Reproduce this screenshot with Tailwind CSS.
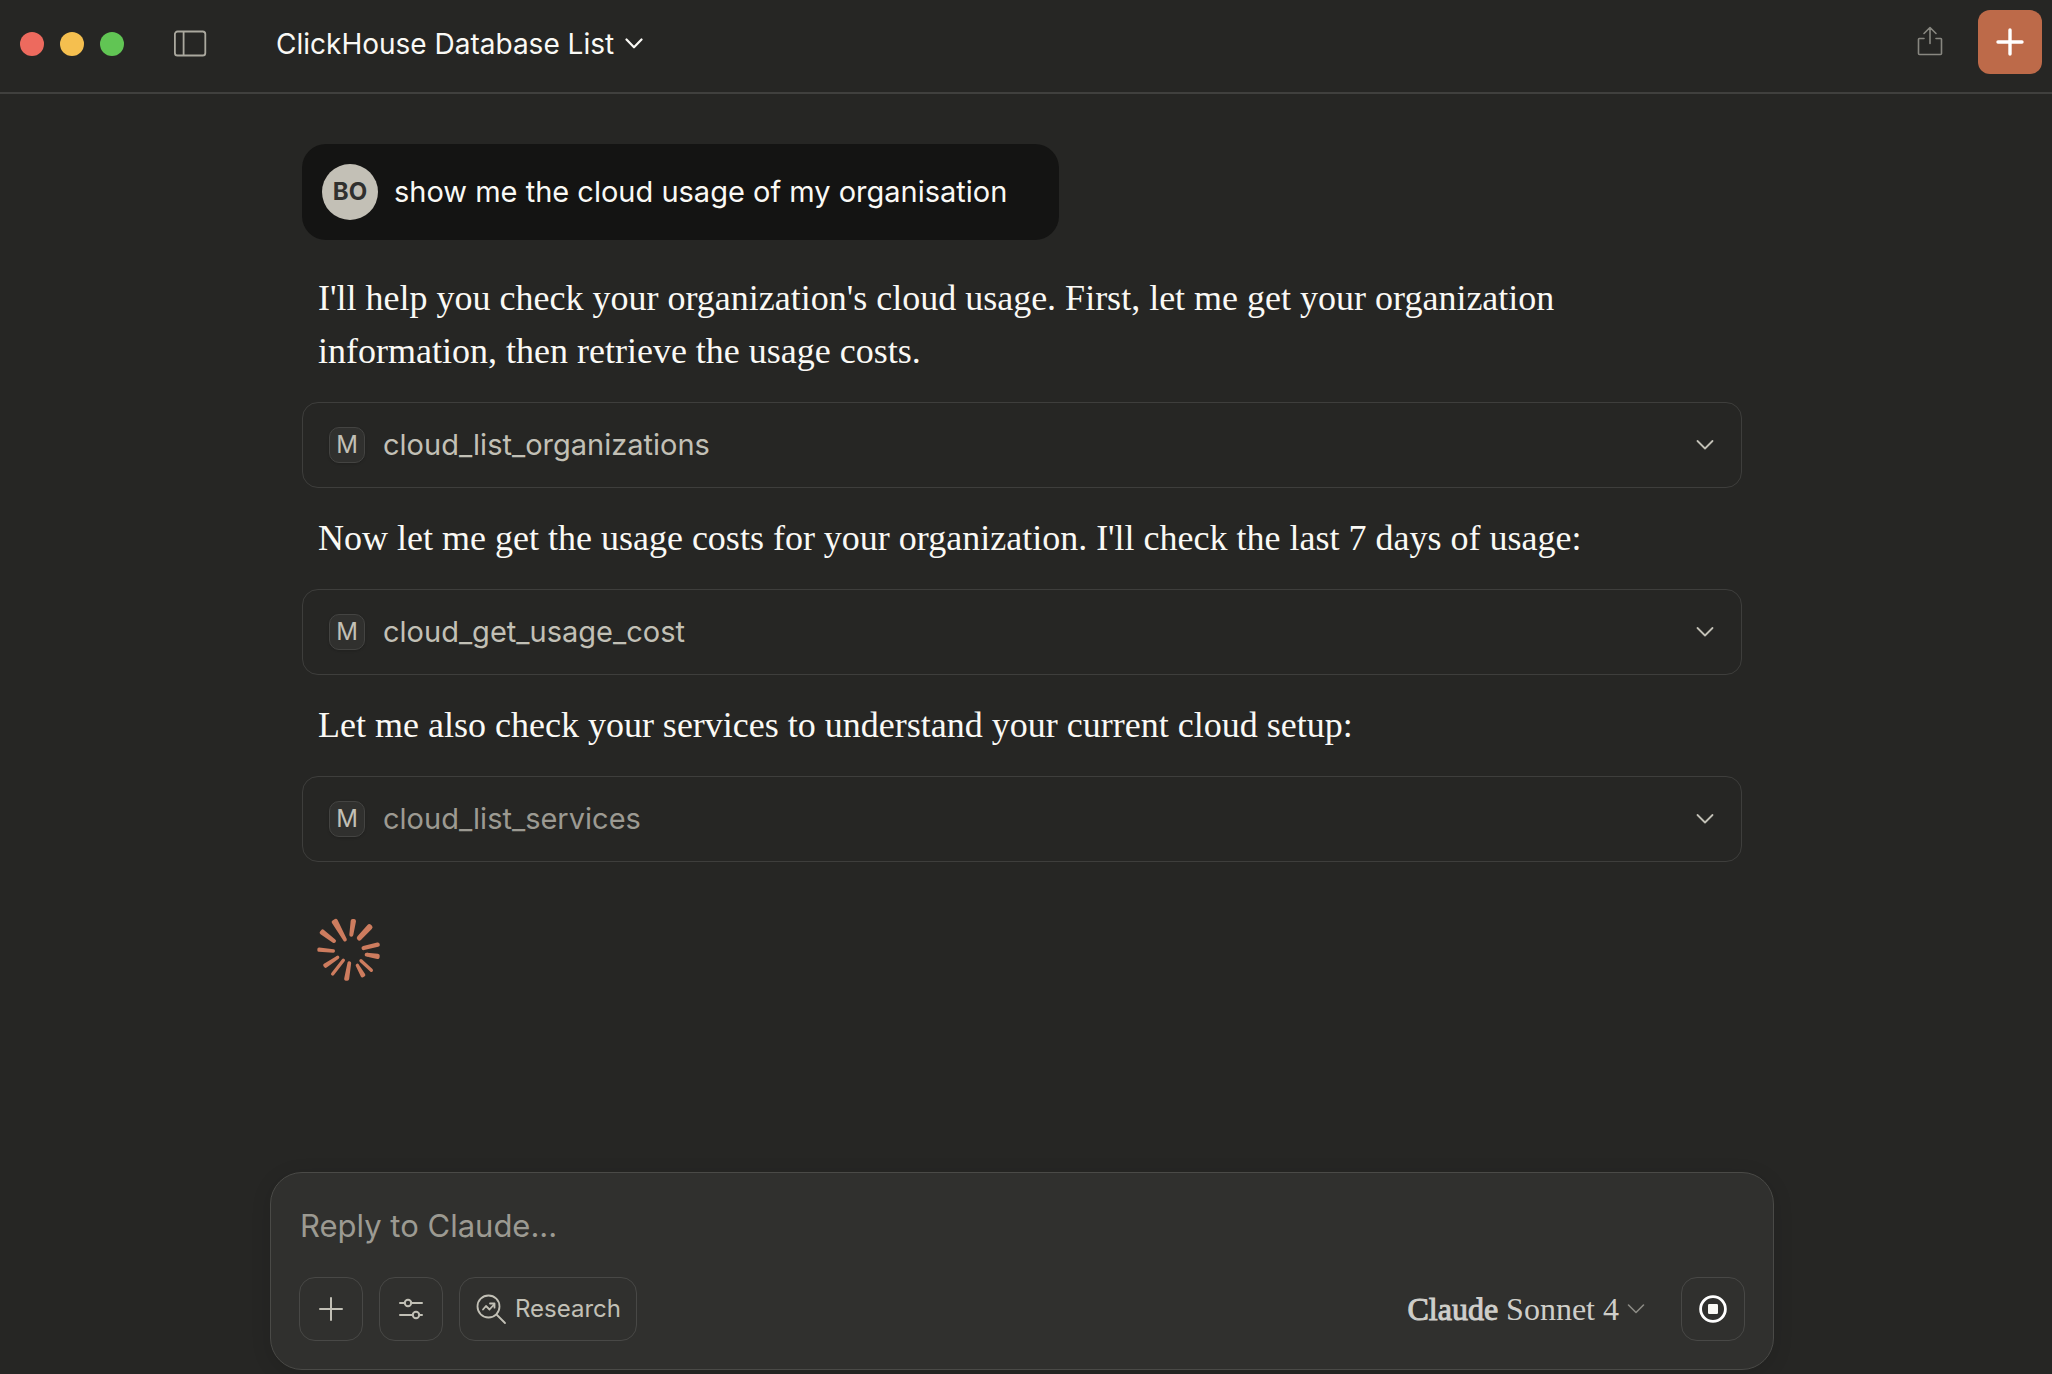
<!DOCTYPE html>
<html lang="en">
<head>
<meta charset="utf-8">
<meta name="viewport" content="width=device-width, initial-scale=1">
<title>ClickHouse Database List</title>
<script src="https://cdn.jsdelivr.net/npm/@tailwindcss/browser@4"></script>
</head>
<body class="flex min-h-screen flex-col bg-[#262624] font-['Inter',sans-serif] text-[#faf9f5]">

<header class="flex items-start justify-between border-b-2 border-[#40403e] pt-[10px] pr-[10px] pb-[14px] pl-5">
  <div class="flex h-[68px] items-center">
    <div class="flex gap-4">
      <button aria-label="Close" class="size-6 rounded-full bg-[#ed6a5e]"></button>
      <button aria-label="Minimize" class="size-6 rounded-full bg-[#f5bf4f]"></button>
      <button aria-label="Zoom" class="size-6 rounded-full bg-[#61c554]"></button>
    </div>
    <button aria-label="Toggle sidebar" class="ml-12">
      <svg class="h-7 w-9" viewBox="0 0 36 28" fill="none" stroke="#aaa89e" stroke-width="1.8"><rect x="2.9" y="1.5" width="30.4" height="24" rx="2.6"/><path d="M11.6 1.5v24"/></svg>
    </button>
    <button class="ml-[68px] flex items-center gap-[11px] text-[28px]">
      <h1>ClickHouse Database List</h1>
      <svg class="h-3 w-[18px]" viewBox="0 0 18 12" fill="none" stroke="#faf9f5" stroke-width="2.2" stroke-linecap="round" stroke-linejoin="round"><path d="M1.5 1.5 9 9.3l7.500-7.800"/></svg>
    </button>
  </div>
  <div class="flex h-16 items-center gap-[34px]">
    <button aria-label="Share">
      <svg class="h-8 w-7" viewBox="0 0 28 32" fill="none" stroke="#888780" stroke-width="1.6" stroke-linecap="round" stroke-linejoin="round"><path d="M8 12.500H3.200Q2.500 12.500 2.500 13.200V27.500Q2.500 28.500 3.500 28.500H24.500Q25.500 28.500 25.500 27.500V13.200Q25.500 12.500 24.800 12.500H20M14 17.500V1.500M8 7.500l6-6 6 6"/></svg>
    </button>
    <button aria-label="New chat" class="flex size-16 items-center justify-center rounded-xl bg-[#bd6a49]">
      <svg class="size-7" viewBox="0 0 28 28" stroke="#fff" stroke-width="3.400" stroke-linecap="round"><path d="M14 2v24M2 14h24"/></svg>
    </button>
  </div>
</header>

<main class="mx-auto w-full max-w-[1448px] flex-1 pt-[50px] pr-2">
  <div class="flex w-fit items-center gap-4 rounded-3xl bg-[#141413] py-5 pr-[52px] pl-5 text-[29px]">
    <span class="flex size-14 items-center justify-center rounded-full bg-[#c3c0b6] text-2xl font-bold text-[#30302e]">BO</span>
    <p>show me the cloud usage of my organisation</p>
  </div>

  <section class="mt-8 flex flex-col gap-6">
    <p class="max-w-[1330px] px-4 font-['Liberation_Serif',serif] text-[36px] leading-[53px]">I'll help you check your organization's cloud usage. First, let me get your organization information, then retrieve the usage costs.</p>
    <button class="flex h-[86px] items-center gap-[18px] rounded-2xl border border-[#3e3e3c] pr-[27px] pl-[26px] text-[29px] text-[#c2c0b6]">
      <span class="flex size-9 items-center justify-center rounded-[10px] border border-[#444442] bg-[#30302e] text-2xl shadow-sm">M</span>
      <span>cloud_list_organizations</span>
      <svg class="ml-auto h-3 w-[18px]" viewBox="0 0 18 12" fill="none" stroke="#c2c0b6" stroke-width="1.800" stroke-linecap="round" stroke-linejoin="round"><path d="M1.500 2 9 9.500 16.500 2"/></svg>
    </button>

    <p class="px-4 font-['Liberation_Serif',serif] text-[36px] leading-[53px]">Now let me get the usage costs for your organization. I'll check the last 7 days of usage:</p>
    <button class="flex h-[86px] items-center gap-[18px] rounded-2xl border border-[#3e3e3c] pr-[27px] pl-[26px] text-[29px] text-[#c2c0b6]">
      <span class="flex size-9 items-center justify-center rounded-[10px] border border-[#444442] bg-[#30302e] text-2xl shadow-sm">M</span>
      <span>cloud_get_usage_cost</span>
      <svg class="ml-auto h-3 w-[18px]" viewBox="0 0 18 12" fill="none" stroke="#c2c0b6" stroke-width="1.800" stroke-linecap="round" stroke-linejoin="round"><path d="M1.500 2 9 9.500 16.500 2"/></svg>
    </button>

    <p class="px-4 font-['Liberation_Serif',serif] text-[36px] leading-[53px]">Let me also check your services to understand your current cloud setup:</p>
    <button class="flex h-[86px] items-center gap-[18px] rounded-2xl border border-[#3e3e3c] pr-[27px] pl-[26px] text-[29px] text-[#c2c0b6]">
      <span class="flex size-9 items-center justify-center rounded-[10px] border border-[#444442] bg-[#30302e] text-2xl shadow-sm">M</span>
      <span class="text-[#9c9a92]">cloud_list_services</span>
      <svg class="ml-auto h-3 w-[18px]" viewBox="0 0 18 12" fill="none" stroke="#c2c0b6" stroke-width="1.800" stroke-linecap="round" stroke-linejoin="round"><path d="M1.500 2 9 9.500 16.500 2"/></svg>
    </button>
  </section>

  <svg role="img" aria-label="Working" class="mt-14 ml-[15px] size-16" viewBox="50 54 192 192" fill="#cd7c5e" stroke="#cd7c5e" stroke-linecap="round" stroke-linejoin="round">
    <path stroke-width="11" d="M106.500 62 134 119 99.500 66z"/>
    <path stroke-width="12" d="M161 63.200 153 104 157 62.800z"/>
    <path stroke-width="15" d="M209 82 177 114 207 80z"/>
    <path stroke-width="13" d="M232 134 190 144"/>
    <path stroke-width="12" d="M232.200 167 199 164 231.800 171z"/>
    <path stroke-width="10" d="M213 211 182 182"/>
    <path stroke-width="10" d="M190 225 171 196 186 227z"/>
    <path stroke-width="11" d="M141 236.500 147 189 137 236.500z"/>
    <path stroke-width="10" d="M97 222 129 181"/>
    <path stroke-width="10" d="M76 198.500 112 172 73.500 195.500z"/>
    <path stroke-width="10" d="M56 147.500 99 153 56 150.500z"/>
    <path stroke-width="12" d="M67 94.400 101 123 64 98z"/>
  </svg>
</main>

<footer class="mx-auto w-full max-w-[1512px] pr-2 pb-1">
  <form class="flex flex-col gap-7 rounded-[32px] border border-[#4a4a47] bg-[#30302e] p-7 shadow-[0_4px_20px_rgba(0,0,0,0.12)]">
    <input type="text" aria-label="Reply to Claude" placeholder="Reply to Claude..." class="h-12 w-full px-px text-[31px] outline-none placeholder:text-[#9c9a92]">
    <div class="flex items-center gap-4">
      <button type="button" aria-label="Add content" class="flex size-16 items-center justify-center rounded-2xl border border-[#484846]">
        <svg class="size-6" viewBox="0 0 24 24" stroke="#c2c0b6" stroke-width="2" stroke-linecap="round"><path d="M12 1v22M1 12h22"/></svg>
      </button>
      <button type="button" aria-label="Search and tools" class="flex size-16 items-center justify-center rounded-2xl border border-[#484846]">
        <svg class="size-6" viewBox="0 0 24 24" fill="none" stroke="#c2c0b6" stroke-width="2" stroke-linecap="round"><path d="M1 6h4.500M12.500 6H23M1 18h12.500M20.500 18H23"/><circle cx="9" cy="6" r="3.200"/><circle cx="17" cy="18" r="3.200"/></svg>
      </button>
      <button type="button" class="flex h-16 items-center gap-2 rounded-2xl border border-[#484846] px-[15px] text-2xl text-[#c2c0b6]">
        <svg class="size-8" viewBox="0 0 32 32" fill="none" stroke="#c2c0b6" stroke-width="1.800" stroke-linecap="round" stroke-linejoin="round"><circle cx="13.500" cy="13.500" r="11"/><path d="M21.500 21.500 30 30M8 16.500 11 13l3.500 3.500 5-5.500M15 10.500H19.500V14.700"/></svg>
        Research
      </button>
      <button type="button" aria-haspopup="listbox" class="ml-auto flex items-center gap-2 font-['Liberation_Serif',serif] text-[32px] text-[#cfcec9]">
        <span class="[-webkit-text-stroke:1px]">Claude</span>
        <span>Sonnet 4</span>
        <svg class="h-3 w-[18px]" viewBox="0 0 18 12" fill="none" stroke="#8b8a84" stroke-width="1.600" stroke-linecap="round" stroke-linejoin="round"><path d="M1.500 2 9 9.500 16.500 2"/></svg>
      </button>
      <button type="button" aria-label="Stop response" class="ml-5 flex size-16 items-center justify-center rounded-2xl border border-[#484846]">
        <svg class="size-7" viewBox="0 0 28 28" fill="none"><circle cx="14" cy="14" r="12.400" stroke="#fff" stroke-width="2.800"/><rect x="9" y="9" width="10" height="10" rx="1.200" fill="#faf9f5"/></svg>
      </button>
    </div>
  </form>
</footer>
</body>
</html>
